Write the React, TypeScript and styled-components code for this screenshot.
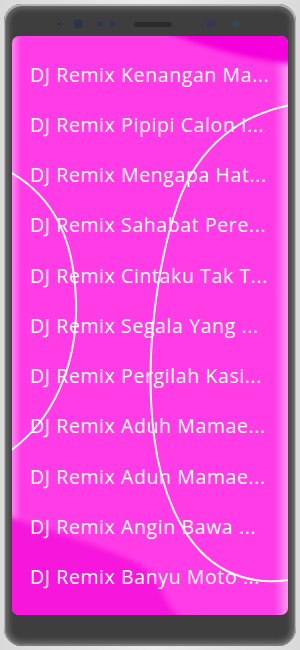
import React from "react";
import styled, { createGlobalStyle } from "styled-components";

const GlobalStyle = createGlobalStyle`
  html, body {
    margin: 0;
    padding: 0;
    background: #e3e3e3;
  }
  body {
    font-family: "Open Sans", "Noto Sans", sans-serif;
  }
`;

const Page = styled.div`
  width: 300px;
  height: 650px;
  padding: 4px;
  box-sizing: border-box;
  background: linear-gradient(to right, #dadada 0%, #ececec 50%, #dadada 100%);
`;

const Phone = styled.div`
  width: 292px;
  height: 642px;
  box-sizing: border-box;
  padding: 0 8px 31px;
  display: flex;
  flex-direction: column;
  border-radius: 18px;
  background: #3e3e3e;
  box-shadow: inset 0 1px 0 1px #b4b4b4, inset 0 0 0 2px #7a7a7a,
    inset 0 0 5px 5px #686868;
`;

const Bezel = styled.div`
  height: 32px;
  box-sizing: border-box;
  padding-top: 8px;
  display: flex;
  align-items: center;
`;

const Sensor = styled.div<{ $size: number; $color: string; $gap: number }>`
  width: ${(p) => p.$size}px;
  height: ${(p) => p.$size}px;
  margin-left: ${(p) => p.$gap}px;
  border-radius: 50%;
  background: ${(p) => p.$color};
  box-shadow: 0 0 1px 1px rgba(80, 80, 110, 0.25);
  flex-shrink: 0;
`;

const Speaker = styled.div`
  width: 38px;
  height: 5px;
  margin-left: 19px;
  border-radius: 3px;
  background: #2b2b2b;
  flex-shrink: 0;
`;

const Screen = styled.div`
  position: relative;
  flex: 1;
  border-radius: 7px;
  overflow: hidden;
  background: linear-gradient(
      to right,
      #ff86f2 0px,
      rgba(255, 60, 230, 0) 9px,
      rgba(255, 60, 230, 0) calc(100% - 14px),
      #ff94f4 100%
    ),
    #ff3ce6;
`;

const Art = styled.svg`
  position: absolute;
  inset: 0;
  width: 100%;
  height: 100%;
`;

const List = styled.div`
  position: relative;
  padding: 13px 18px 0;
`;

const Row = styled.div`
  height: 50.25px;
  display: flex;
  align-items: center;
`;

const Title = styled.span`
  color: #ffffff;
  font-size: 19.5px;
  letter-spacing: 0.6px;
  white-space: nowrap;
  overflow: hidden;
`;

const songs = [
  "DJ Remix Kenangan Ma...",
  "DJ Remix Pipipi Calon I...",
  "DJ Remix Mengapa Hat...",
  "DJ Remix Sahabat Pere...",
  "DJ Remix Cintaku Tak T...",
  "DJ Remix Segala Yang ...",
  "DJ Remix Pergilah Kasi...",
  "DJ Remix Aduh Mamae...",
  "DJ Remix Adun Mamae...",
  "DJ Remix Angin Bawa ...",
  "DJ Remix Banyu Moto ...",
];

function Backdrop() {
  return (
    <Art viewBox="0 0 276 579" preserveAspectRatio="none">
      <defs>
        <filter id="soft" x="-10%" y="-10%" width="120%" height="120%">
          <feGaussianBlur stdDeviation="2.5" />
        </filter>
      </defs>
      <path
        d="M150 -4 C180 4, 210 20, 280 28 L280 -4 Z"
        fill="#f306da"
        filter="url(#soft)"
      />
      <path
        d="M-4 480 C40 498, 95 510, 130 530 C150 545, 150 566, 170 584 L-4 584 Z"
        fill="#f614dc"
        filter="url(#soft)"
      />
      <path
        d="M-2 136 C40 160, 62 200, 64 265 C66 330, 40 385, -2 415"
        fill="none"
        stroke="#ffffff"
        strokeWidth="2"
      />
      <path
        d="M290 67 C230 75, 185 110, 165 170 C145 230, 132 320, 142 400 C150 464, 175 515, 215 535 C240 547, 265 548, 290 541"
        fill="none"
        stroke="#ffffff"
        strokeWidth="2"
      />
    </Art>
  );
}

function App() {
  return (
    <>
      <GlobalStyle />
      <Page>
        <Phone>
          <Bezel>
            <Sensor $size={4} $color="#2f3340" $gap={45} />
            <Sensor $size={10} $color="#2d3545" $gap={12} />
            <Sensor $size={6} $color="#33344a" $gap={14} />
            <Sensor $size={6} $color="#33344a" $gap={6} />
            <Speaker />
            <Sensor $size={10} $color="#3b3350" $gap={34} />
            <Sensor $size={6} $color="#2e4a55" $gap={18} />
          </Bezel>
          <Screen>
            <Backdrop />
            <List>
              {songs.map((s) => (
                <Row key={s}>
                  <Title>{s}</Title>
                </Row>
              ))}
            </List>
          </Screen>
        </Phone>
      </Page>
    </>
  );
}

export default App;
